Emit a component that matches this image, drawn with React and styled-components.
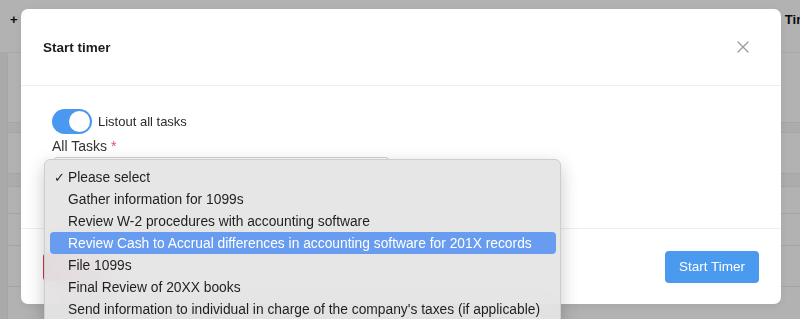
import styled, { createGlobalStyle } from 'styled-components';

const GlobalStyle = createGlobalStyle`
    html, body {
        margin: 0;
        padding: 0;
        width: 800px;
        height: 319px;
        overflow: hidden;
        font-family: "Liberation Sans", Arial, sans-serif;
        background: #ffffff;
    }
`

// page behind the modal
const Page = styled.div`
    width: 800px;
    height: 319px;
    display: flex;
    flex-direction: column;
    background: #ffffff;
`

const TopBar = styled.div`
    height: 53px;
    display: flex;
    justify-content: space-between;
    align-items: flex-start;
    padding: 12px 0 0 10px;
    box-sizing: border-box;
    border-bottom: 1px solid #f2f2f2;
    font-size: 13px;
    font-weight: bold;
    color: #111;
    >span:last-child{
        margin-right: -20px;
    }
`

const PageBody = styled.div`
    flex: 1;
    display: flex;
`

const SideStrip = styled.div`
    width: 7px;
    background: #f4f4f4;
    border-right: 1px solid #ececec;
`

const Rows = styled.div`
    flex: 1;
    display: flex;
    flex-direction: column;
`

const Row = styled.div`
    height: ${p => p.h}px;
    border-bottom: 1px solid #ececec;
    background: ${p => p.shade ? '#f7f7f7' : '#ffffff'};
`

// modal
const Overlay = styled.div`
    position: fixed;
    inset: 0;
    background: rgba(0, 0, 0, 0.3);
    padding: 9px 0 0 21px;
    box-sizing: border-box;
`

const Modal = styled.div`
    width: 760px;
    height: 295px;
    background: #ffffff;
    border-radius: 7px;
    display: flex;
    flex-direction: column;
    box-shadow: 0 2px 10px rgba(0, 0, 0, 0.08);
`

const ModalHeader = styled.div`
    height: 76px;
    display: flex;
    align-items: center;
    justify-content: space-between;
    padding: 0 32px 0 22px;
    border-bottom: 1px solid #efefef;
    >h1{
        margin: 0;
        font-size: 13.5px;
        font-weight: bold;
        color: #1d1d1f;
    }
`

const CloseBtn = styled.button`
    border: none;
    background: none;
    padding: 0;
    width: 12px;
    height: 12px;
    display: flex;
    cursor: pointer;
`

const ModalBody = styled.div`
    padding: 23px 31px 37px;
    border-bottom: 1px solid #efefef;
    display: flex;
    flex-direction: column;
`

const ToggleRow = styled.label`
    display: flex;
    align-items: center;
    gap: 6px;
    height: 25px;
    font-size: 13px;
    color: #2b2b2b;
`

const Toggle = styled.span`
    width: 40px;
    height: 25px;
    border-radius: 13px;
    background: #4a98f0;
    position: relative;
    &::after{
        content: '';
        position: absolute;
        top: 2px;
        right: 2px;
        width: 21px;
        height: 21px;
        border-radius: 50%;
        background: #ffffff;
    }
`

const FieldLabel = styled.div`
    margin-top: 3px;
    font-size: 14px;
    line-height: 18px;
    color: #333;
    >span{
        color: #e8476b;
    }
`

const SelectWrap = styled.div`
    position: relative;
    margin-top: 2px;
`

const SelectBox = styled.div`
    width: 339px;
    height: 34px;
    border: 1px solid #cfcfcf;
    border-radius: 6px;
    box-sizing: border-box;
    background: #ffffff;
`

const Menu = styled.ul`
    position: absolute;
    top: 2px;
    left: -8px;
    width: 515px;
    margin: 0;
    padding: 6px 0;
    list-style: none;
    background: rgba(228, 228, 228, 0.92);
    backdrop-filter: blur(18px);
    border: 1px solid #cdcdcd;
    border-radius: 6px;
    box-shadow: 0 6px 18px rgba(0, 0, 0, 0.22);
    z-index: 5;
`

const MenuItem = styled.li`
    display: flex;
    align-items: center;
    height: 22px;
    margin: 0 4px 0 5px;
    padding-left: 4px;
    border-radius: 4px;
    font-size: 13.8px;
    color: ${p => p.active ? '#ffffff' : '#1f1f1f'};
    background: ${p => p.active ? '#679cf0' : 'transparent'};
    white-space: nowrap;
`

const Check = styled.span`
    width: 14px;
    flex: none;
    font-size: 13px;
`

const ModalFooter = styled.div`
    flex: 1;
    display: flex;
    align-items: center;
    justify-content: space-between;
    padding: 0 22px;
`

const Button = styled.button`
    height: ${p => p.danger ? 28 : 32}px;
    width: ${p => p.danger ? '60px' : 'auto'};
    padding: 0 14px;
    border: none;
    border-radius: 4px;
    font-family: "Liberation Sans", Arial, sans-serif;
    font-size: 13.5px;
    color: #ffffff;
    background: ${p => p.danger ? '#c9375b' : '#4a9bf0'};
`

const tasks = [
    'Please select',
    'Gather information for 1099s',
    'Review W-2 procedures with accounting software',
    'Review Cash to Accrual differences in accounting software for 201X records',
    'File 1099s',
    'Final Review of 20XX books',
    "Send information to individual in charge of the company's taxes (if applicable)",
];

const App = () => {
    return (
        <>
            <GlobalStyle />
            <Page>
                <TopBar>
                    <span>+</span>
                    <span>Timer</span>
                </TopBar>
                <PageBody>
                    <SideStrip />
                    <Rows>
                        <Row h={69} />
                        <Row h={9} shade />
                        <Row h={40} />
                        <Row h={12} shade />
                        <Row h={26} />
                        <Row h={31} />
                        <Row h={40} />
                    </Rows>
                </PageBody>
            </Page>

            <Overlay>
                <Modal>
                    <ModalHeader>
                        <h1>Start timer</h1>
                        <CloseBtn aria-label="close">
                            <svg width="12" height="12" viewBox="0 0 12 12" fill="none" xmlns="http://www.w3.org/2000/svg">
                                <path d="M1 1L11 11M11 1L1 11" stroke="#9a9aa2" strokeWidth="1.3" strokeLinecap="round"/>
                            </svg>
                        </CloseBtn>
                    </ModalHeader>
                    <ModalBody>
                        <ToggleRow>
                            <Toggle />
                            Listout all tasks
                        </ToggleRow>
                        <FieldLabel>All Tasks <span>*</span></FieldLabel>
                        <SelectWrap>
                            <SelectBox />
                            <Menu>
                                {tasks.map((t, i) => (
                                    <MenuItem key={t} active={i === 3}>
                                        <Check>{i === 0 ? '✓' : ''}</Check>
                                        {t}
                                    </MenuItem>
                                ))}
                            </Menu>
                        </SelectWrap>
                    </ModalBody>
                    <ModalFooter>
                        <Button danger aria-label="Delete" />
                        <Button>Start Timer</Button>
                    </ModalFooter>
                </Modal>
            </Overlay>
        </>
    );
}

export default App;
